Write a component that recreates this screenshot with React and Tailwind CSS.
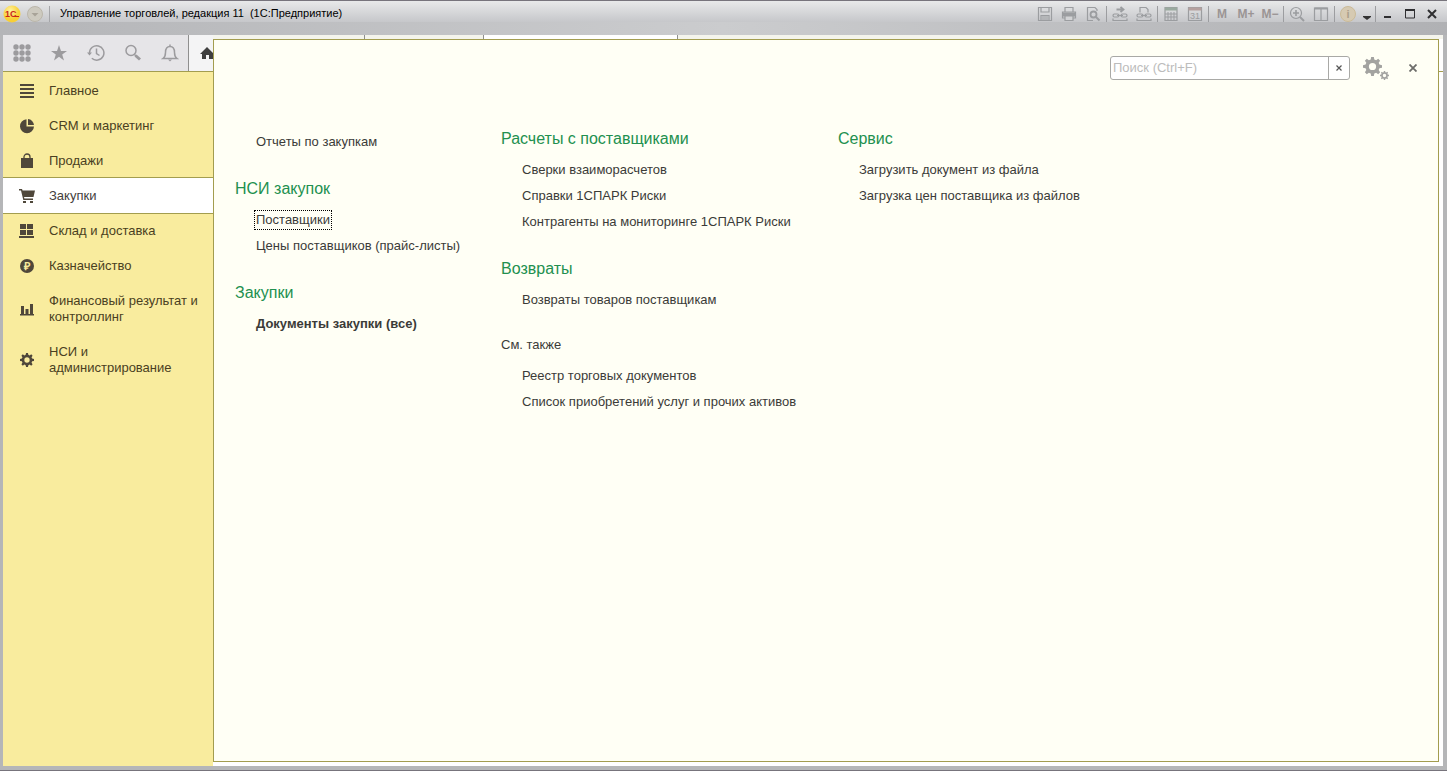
import { useState } from "react";
import clsx from "clsx";

const GEAR =
  "M8.6 0h2.8l.5 2.6 1.9.8L16 1.9l2 2-1.5 2.2.8 1.9 2.7.6v2.8l-2.7.5-.8 1.9 1.5 2.3-2 2-2.2-1.5-1.9.8-.5 2.6H8.6l-.5-2.6-1.9-.8L4 18.1l-2-2 1.5-2.3-.8-1.9-2.7-.5V8.6L2.7 8l.8-1.9L2 3.9l2-2 2.2 1.5 1.9-.8zM10 6.2a3.8 3.8 0 1 0 0 7.6 3.8 3.8 0 0 0 0-7.6z";

function Gear({ className }) {
  return (
    <svg viewBox="0 0 20 20" className={className} fill="currentColor">
      <path fillRule="evenodd" d={GEAR} />
    </svg>
  );
}

function Icon({ children }) {
  return (
    <svg
      width="16"
      height="16"
      viewBox="0 0 16 16"
      className="shrink-0"
      fill="currentColor"
    >
      {children}
    </svg>
  );
}

const sections = [
  {
    name: "Главное",
    icon: (
      <Icon>
        <path d="M1 1h14v2H1zM1 5h14v2H1zM1 9h14v2H1zM1 13h14v2H1z" />
      </Icon>
    ),
  },
  {
    name: "CRM и маркетинг",
    icon: (
      <Icon>
        <path d="M7.5 1.200V8.500H15A7 7 0 1 1 7.500 1.200z" />
        <path d="M9 1a6.500 6.500 0 0 1 6 6H9z" />
      </Icon>
    ),
  },
  {
    name: "Продажи",
    icon: (
      <Icon>
        <path d="M2 5h12v10H2z" />
        <path
          d="M5 7V4a3 3 0 0 1 6 0v3"
          fill="none"
          stroke="currentColor"
          strokeWidth="1.300"
        />
      </Icon>
    ),
  },
  {
    name: "Закупки",
    icon: (
      <Icon>
        <path d="M0 1h3l.6 1.500H16L14.500 9H5l.4 1.500H14V12H4.300L2 2.500H0z" />
        <path d="M4 13h3v2H4zM11 13h3v2h-3z" />
      </Icon>
    ),
  },
  {
    name: "Склад и доставка",
    icon: (
      <Icon>
        <path d="M1 1h6v5H1zM8 1h6v5H8zM1 7h6v5H1zM8 7h6v5H8zM0 13h15v2H0z" />
      </Icon>
    ),
  },
  {
    name: "Казначейство",
    icon: (
      <Icon>
        <circle cx="8" cy="8" r="7" />
        <text
          x="8"
          y="12"
          textAnchor="middle"
          className="fill-[#f9ec9e] text-[11px] font-bold"
        >
          ₽
        </text>
      </Icon>
    ),
  },
  {
    name: "Финансовый результат и контроллинг",
    icon: (
      <Icon>
        <path d="M1 13h14v1.500H1zM2 5h3v8H2zM6.500 8h3v5h-3zM11 3h3v10h-3z" />
      </Icon>
    ),
  },
  {
    name: "НСИ и администрирование",
    icon: <Gear className="size-4 shrink-0 p-px" />,
  },
];

const columns = [
  [
    { links: ["Отчеты по закупкам"] },
    { title: "НСИ закупок", links: ["Поставщики", "Цены поставщиков (прайс-листы)"] },
    { title: "Закупки", links: ["Документы закупки (все)"] },
  ],
  [
    {
      title: "Расчеты с поставщиками",
      links: [
        "Сверки взаиморасчетов",
        "Справки 1СПАРК Риски",
        "Контрагенты на мониторинге 1СПАРК Риски",
      ],
    },
    { title: "Возвраты", links: ["Возвраты товаров поставщикам"] },
    {
      title: "См. также",
      plain: true,
      links: [
        "Реестр торговых документов",
        "Список приобретений услуг и прочих активов",
      ],
    },
  ],
  [
    {
      title: "Сервис",
      links: ["Загрузить документ из файла", "Загрузка цен поставщика из файлов"],
    },
  ],
];

function Group({ title, links, plain }) {
  return (
    <section>
      {title && (
        <h2
          className={clsx(
            plain
              ? "h-[26px] text-[13px] leading-4"
              : "h-7 text-[16px] leading-5 text-[#22904f]"
          )}
        >
          {title}
        </h2>
      )}
      <ul className="pl-[19px]">
        {links.map((link) => (
          <li key={link} className="flex h-[26px] items-center">
            <a
              href="#"
              className={clsx(
                "border border-dotted px-px leading-[18px] whitespace-nowrap",
                link === "Поставщики" ? "border-black" : "border-transparent",
                link === "Документы закупки (все)" && "font-bold"
              )}
            >
              {link}
            </a>
          </li>
        ))}
      </ul>
    </section>
  );
}

function TitleButton({ label, children }) {
  return (
    <button
      type="button"
      aria-label={label}
      className="flex h-5 w-6 shrink-0 items-center justify-center"
    >
      {children}
    </button>
  );
}

function LineIcon({ children }) {
  return (
    <svg
      width="16"
      height="16"
      viewBox="0 0 16 16"
      fill="none"
      stroke="currentColor"
      strokeWidth="1.200"
    >
      {children}
    </svg>
  );
}

function Divider() {
  return <span className="mx-px h-4 w-px shrink-0 bg-[#9c9da0]" />;
}

function TitleBar() {
  return (
    <header className="h-[35px] shrink-0 bg-linear-to-r from-[#b4b5b8] via-[#cbccce] to-[#b0b1b4]">
      <div className="flex h-[22px] items-center border-t border-[#77747c] bg-linear-to-b from-[#e8e9ea] to-[#c6c7ca] pt-1">
        <svg width="18" height="18" viewBox="0 0 18 18" className="ml-[3px] shrink-0">
          <defs>
            <radialGradient id="logo" cx="40%" cy="30%">
              <stop offset="0" stopColor="#fff3a0" />
              <stop offset="1" stopColor="#f8cf35" />
            </radialGradient>
          </defs>
          <circle cx="9" cy="9" r="8.500" fill="url(#logo)" />
          <text x="2" y="12" className="fill-[#c9251a] text-[9px] font-bold">
            1С
          </text>
          <path d="M11 11.500h5" stroke="#c9251a" />
        </svg>
        <button type="button" aria-label="Меню" className="ml-[6px]">
          <svg width="16" height="16" viewBox="0 0 16 16">
            <circle cx="8" cy="8" r="7.500" fill="#cdcabf" stroke="#bbb6aa" />
            <path d="M4.500 7h7L8 10.500z" fill="#a8a398" />
          </svg>
        </button>
        <span className="ml-[6px] h-4 w-px bg-[#a5a6a9]" />
        <h1 className="ml-[10px] text-[11px] whitespace-pre text-black">
          Управление торговлей, редакция 11  (1С:Предприятие)
        </h1>
        <div className="ml-auto flex items-center text-[#9b9da0]">
          <TitleButton label="Сохранить">
            <LineIcon>
              <path d="M1.500 1.500h13v13h-13zM4 1.500V6h8V1.500M4 14.500V9.500h8v5M5 11h6M5 13h6" />
            </LineIcon>
          </TitleButton>
          <TitleButton label="Печать">
            <LineIcon>
              <path d="M4 6V1.500h8V6M4 12H1.500V6h13v6H12" />
              <path d="M2 7h12v3H2z" fill="currentColor" />
              <path d="M4 10h8v4.500H4z" className="fill-[#d2d3d5]" />
            </LineIcon>
          </TitleButton>
          <TitleButton label="Предварительный просмотр">
            <LineIcon>
              <path d="M12 5V3.500L10 1.500H2.500v13H8" />
              <circle cx="8.500" cy="8.500" r="3" strokeWidth="1.800" />
              <path d="M11 11l3.500 3.500" strokeWidth="2" />
            </LineIcon>
          </TitleButton>
          <Divider />
          <TitleButton label="Добавить ссылку">
            <LineIcon>
              <path d="M4.500 3.500h7M8.500 1l3 2.500-3 2.500" strokeWidth="1.800" />
              <rect x="1" y="8" width="6" height="3" rx="1.500" />
              <rect x="9" y="8" width="6" height="3" rx="1.500" />
              <path d="M5 9.500h6M1 12.500v2h14v-2" />
            </LineIcon>
          </TitleButton>
          <TitleButton label="Перейти по ссылке">
            <LineIcon>
              <path d="M4 6.500V1.500h6l2 2v3" />
              <rect x="1" y="8" width="6" height="3" rx="1.500" />
              <rect x="9" y="8" width="6" height="3" rx="1.500" />
              <path d="M5 9.500h6M1 12.500v2h14v-2" />
            </LineIcon>
          </TitleButton>
          <Divider />
          <TitleButton label="Калькулятор">
            <LineIcon>
              <path d="M2 1.500h12v13H2z" />
              <path d="M2 3h12" stroke="#9aaa9f" strokeWidth="3" />
              <path d="M5 6v8M8 6v8M11 6v8M2 8h12M2 11h12" strokeWidth="1" />
            </LineIcon>
          </TitleButton>
          <TitleButton label="Календарь">
            <LineIcon>
              <path d="M1.500 1.500h13v13h-13z" />
              <path d="M1.500 3h13" stroke="#b5a09e" strokeWidth="3" />
              <text
                x="8"
                y="13"
                textAnchor="middle"
                fill="currentColor"
                stroke="none"
                className="text-[9px]"
              >
                31
              </text>
            </LineIcon>
          </TitleButton>
          <Divider />
          <div className="flex items-center text-[12px] font-bold text-[#9b9595]">
            <button type="button" className="h-5 w-6">M</button>
            <button type="button" className="h-5 w-6">M+</button>
            <button type="button" className="h-5 w-6">M−</button>
          </div>
          <Divider />
          <TitleButton label="Увеличить">
            <LineIcon>
              <circle cx="7" cy="7" r="5.500" />
              <path d="M4 7h6M7 4v6" strokeWidth="1.600" />
              <path d="M11 11l4 4" strokeWidth="2" />
            </LineIcon>
          </TitleButton>
          <TitleButton label="Панели">
            <LineIcon>
              <path d="M1.500 2h13v12.500h-13zM8 2v12.500" />
              <path d="M1.500 2.500h13" strokeWidth="2" />
            </LineIcon>
          </TitleButton>
          <Divider />
          <TitleButton label="Справка">
            <svg width="16" height="16" viewBox="0 0 16 16">
              <circle cx="8" cy="8" r="7.500" fill="#d6cab2" stroke="#cbbb98" />
              <text
                x="8"
                y="12"
                textAnchor="middle"
                className="fill-[#ab9f8c] text-[11px] font-bold"
              >
                i
              </text>
            </svg>
          </TitleButton>
          <button type="button" aria-label="Ещё" className="flex w-[14px] justify-center">
            <svg width="8" height="16" viewBox="0 0 8 16" fill="#333">
              <path d="M0 10h8v1L4 14 0 11z" />
            </svg>
          </button>
          <Divider />
          <div className="flex items-center pr-1 text-[#2f2f31]">
            <button type="button" aria-label="Свернуть" className="flex w-[22px] justify-center">
              <svg width="12" height="12" viewBox="0 0 12 12" fill="currentColor">
                <path d="M2 8h7v2H2z" />
              </svg>
            </button>
            <button type="button" aria-label="Развернуть" className="flex w-[22px] justify-center">
              <svg width="12" height="12" viewBox="0 0 12 12" fill="none" stroke="currentColor">
                <path d="M1 1h10v2H1z" fill="currentColor" stroke="none" />
                <path d="M1.500 1.500h9v8.500h-9z" />
              </svg>
            </button>
            <button type="button" aria-label="Закрыть" className="flex w-[22px] justify-center">
              <svg width="12" height="12" viewBox="0 0 12 12" stroke="currentColor" strokeWidth="2">
                <path d="M2 2l8 8M10 2l-8 8" />
              </svg>
            </button>
          </div>
        </div>
      </div>
    </header>
  );
}

function ToolButton({ label, children }) {
  return (
    <button
      type="button"
      aria-label={label}
      className="flex h-full w-[37px] shrink-0 items-center justify-center"
    >
      <svg
        width="18"
        height="18"
        viewBox="0 0 18 18"
        fill="none"
        stroke="currentColor"
        strokeWidth="1.500"
      >
        {children}
      </svg>
    </button>
  );
}

function Toolbar() {
  return (
    <div className="flex h-9 shrink-0 overflow-hidden bg-[#e6e5e8] text-[#9c9b9e]">
      <ToolButton label="Меню функций">
        <g fill="currentColor" stroke="none">
          {[3, 9, 15].map((cy) =>
            [3, 9, 15].map((cx) => <circle key={`${cx}-${cy}`} cx={cx} cy={cy} r="2.700" />)
          )}
        </g>
      </ToolButton>
      <ToolButton label="Избранное">
        <path
          d="M9 1l2 6h6l-4.800 3.500L14 16.500l-5-3.700-5 3.700 1.800-6L1 7h6z"
          fill="currentColor"
          stroke="none"
        />
      </ToolButton>
      <ToolButton label="История">
        <path d="M2.500 9a7.200 7.200 0 1 1 2.300 5.200M9.500 4.500V9.500l3 2" />
        <path d="M0 8.500h5L2.500 11.500z" fill="currentColor" stroke="none" />
      </ToolButton>
      <ToolButton label="Поиск">
        <circle cx="7" cy="6.500" r="5" />
        <path d="M10.500 10.500l2 2" />
        <path d="M11.500 11.500l4.500 4" strokeWidth="3" />
      </ToolButton>
      <ToolButton label="Оповещения">
        <path d="M2 14.500h14c-2-1.500-2.500-3-2.500-6 0-3.500-1.500-6-4.500-6s-4.500 2.500-4.500 6c0 3-.5 4.500-2.500 6zM9 2.500V.5" />
        <path d="M7 15.500h4L9 17.500z" fill="currentColor" stroke="none" />
      </ToolButton>
      <button
        type="button"
        aria-label="Начальная страница"
        className="flex flex-1 items-center justify-end overflow-hidden border-l border-[#8f8f8f] bg-[#f4f4f5] text-[#3f3f3f]"
      >
        <svg width="13" height="14" viewBox="0 0 13 14" fill="currentColor">
          <path d="M7 1L0 8h2v5h4V9h3v4h4V7z" />
        </svg>
      </button>
    </div>
  );
}

function Sidebar({ active, onSelect }) {
  return (
    <nav className="flex-1 overflow-hidden border-t border-[#a39d4f] bg-[#f9ec9e] pt-px">
      {sections.map(({ name, icon }, i) => (
        <button
          key={name}
          type="button"
          onClick={() => onSelect(name)}
          className={clsx(
            "flex w-full items-center gap-[14px] pl-4 text-left leading-4",
            i < 6 ? "h-[35px]" : "h-[51px]",
            active === name
              ? "bg-white text-[#44403c] outline outline-[#a39d4f]"
              : "text-[#4a3f22]"
          )}
        >
          <span className="text-[#4f473a]">{icon}</span>
          <span>{name}</span>
        </button>
      ))}
    </nav>
  );
}

export default function App() {
  const [active, setActive] = useState("Закупки");
  const [query, setQuery] = useState("");

  return (
    <div className="flex h-screen flex-col overflow-hidden border-b border-[#77747c] bg-[#b5b6b8] font-['Liberation_Sans',Arial,sans-serif] text-[13px] text-[#3b3b38]">
      <TitleBar />
      <div className="mr-1 mb-1 ml-[3px] flex min-h-0 flex-1">
        <div className="flex w-[210px] shrink-0 flex-col">
          <Toolbar />
          <Sidebar active={active} onSelect={setActive} />
        </div>

        <div className="flex min-w-0 flex-1 flex-col bg-white pb-1">
          {/* Upper edges of the open tabs behind the panel */}
          <div className="flex h-1 shrink-0 bg-[#f4f4ec]">
            <span className="w-[152px] border-r border-[#8f8f8f]" />
            <span className="w-[119px] border-r border-[#8f8f8f]" />
            <span className="w-[194px] border-r border-[#8f8f8f] bg-white" />
          </div>

          <div className="flex flex-1">
            <main className="min-w-0 flex-1 border border-[#a39d4f] bg-[#fffff5]">
              <div className="flex items-center justify-end pt-4 pr-[17px]">
                <div className="flex h-6 w-60 overflow-hidden rounded-[3px] border border-[#a9a9a6] bg-white">
                  <input
                    type="text"
                    aria-label="Поиск"
                    placeholder="Поиск (Ctrl+F)"
                    value={query}
                    onChange={(e) => setQuery(e.target.value)}
                    className="min-w-0 flex-1 px-[2px] outline-none placeholder:text-[#bcbcbc]"
                  />
                  <button
                    type="button"
                    aria-label="Очистить"
                    onClick={() => setQuery("")}
                    className="flex w-[21px] items-center justify-center border-l border-[#a9a9a6]"
                  >
                    <svg width="6" height="6" viewBox="0 0 6 6" stroke="#555" strokeWidth="1.200">
                      <path d="M.5.5l5 5M5.500.5l-5 5" />
                    </svg>
                  </button>
                </div>
                <button
                  type="button"
                  aria-label="Настройки"
                  className="ml-[13px] flex text-[#a3a3a0]"
                >
                  <Gear className="size-[19px]" />
                  <Gear className="mt-[14px] -ml-[2px] size-[9px]" />
                </button>
                <button type="button" aria-label="Закрыть" className="ml-4 p-1">
                  <svg width="8" height="8" viewBox="0 0 8 8" stroke="#6d6d6a" strokeWidth="1.800">
                    <path d="M.5.5l7 7M7.500.5l-7 7" />
                  </svg>
                </button>
              </div>

              <div className="flex gap-[42px] pt-[49px] pl-[21px]">
                <div className="flex w-56 shrink-0 flex-col gap-6">
                  {columns[0].map((group) => (
                    <Group key={group.links[0]} {...group} />
                  ))}
                </div>
                <div className="flex w-[295px] shrink-0 flex-col gap-6">
                  {columns[1].map((group) => (
                    <Group key={group.title} {...group} />
                  ))}
                </div>
                <div className="flex flex-col gap-6">
                  {columns[2].map((group) => (
                    <Group key={group.title} {...group} />
                  ))}
                </div>
              </div>
            </main>
            <div className="h-[33px] w-1 border-b border-[#a39d4f]" />
          </div>
        </div>
      </div>
    </div>
  );
}
